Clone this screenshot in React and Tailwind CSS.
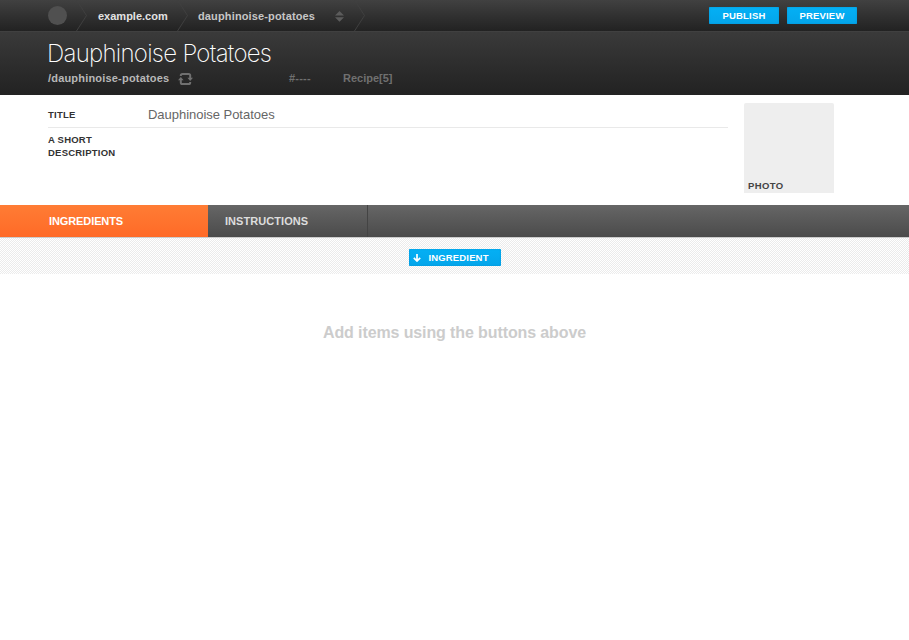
function Separator() {
  return (
    <svg width="12" height="31" viewBox="0 0 12 31" fill="none" className="shrink-0">
      <path d="M.5 0L10.5 15.5L.5 31" stroke="#404040" strokeWidth="1" />
    </svg>
  );
}

function ActionButton({ children }) {
  return (
    <button className="h-[17px] w-[70px] rounded-[1px] bg-linear-to-b from-[#04b0f5] to-[#04a5ea] text-center text-[9.5px] leading-[17px] font-bold tracking-[0.18px] text-white shadow-[inset_0_0_2px_#0794d5]">
      {children}
    </button>
  );
}

function TopBar() {
  return (
    <nav className="flex h-[31px] items-center bg-linear-to-b from-[#414141] to-[#222222] text-[11px] font-bold">
      <span className="ml-12 h-[19px] w-[19px] shrink-0 rounded-full bg-[#505050]" />
      <span className="ml-[9px] flex"><Separator /></span>
      <span className="ml-[10px] w-[79px] pt-[2px] text-[#e2e2e2]">example.com</span>
      <Separator />
      <span className="ml-[9px] w-[137px] pt-[2px] tracking-[0.14px] text-[#c6c6c6]">dauphinoise-potatoes</span>
      <svg width="9" height="11" viewBox="0 0 9 11" className="mt-px shrink-0" fill="#5c5c5c">
        <path d="M4.5 0L9 4.6H0ZM0 6.2H9L4.5 10.8Z" />
      </svg>
      <span className="ml-[10px] flex"><Separator /></span>
      <div className="mr-[52px] ml-auto flex gap-2">
        <ActionButton>PUBLISH</ActionButton>
        <ActionButton>PREVIEW</ActionButton>
      </div>
    </nav>
  );
}

function PageHeader() {
  return (
    <header className="h-16 border-t border-[#404040] bg-linear-to-b from-[#3a3a3a] to-[#222222] pl-12">
      <h1 className="-ml-px pt-[7px] font-['Inter',sans-serif] text-[24px] leading-[30px] font-extralight tracking-[-0.72px] whitespace-nowrap text-white">
        Dauphinoise Potatoes
      </h1>
      <div className="-mt-[2px] flex h-[22px] items-center text-[11px] font-bold text-[#707070]">
        <span className="w-[130px] tracking-[0.19px] text-[#b8b8b8]">/dauphinoise-potatoes</span>
        <svg width="15" height="12" viewBox="0 0 15 12" fill="none" className="mt-[2px] shrink-0">
          <path d="M2.8 3V2.6Q2.8 1 4.4 1H10.6Q12.2 1 12.2 2.6V6M12.2 9V9.4Q12.2 11 10.6 11H4.4Q2.8 11 2.8 9.4V6" stroke="#707070" strokeWidth="2" />
          <path d="M9.4 4.8H15L12.2 8ZM0 7.2L2.8 4L5.6 7.2Z" fill="#707070" />
        </svg>
        <span className="ml-24 w-[54px] tracking-[0.2px]">#----</span>
        <span>Recipe[5]</span>
      </div>
    </header>
  );
}

function DetailsForm() {
  return (
    <section className="flex h-[110px] items-start bg-white pt-2 pl-12">
      <div className="w-[680px] text-[9.5px] leading-[13px] font-bold tracking-[0.22px] text-[#333333]">
        <div className="flex h-[25px] items-center border-b border-[#e9e9e9] pb-px">
          <label className="w-[100px]">TITLE</label>
          <span className="text-[13px] font-normal tracking-[-0.03px] text-[#666666]">Dauphinoise Potatoes</span>
        </div>
        <label className="block w-20 pt-[5px]">A SHORT DESCRIPTION</label>
      </div>
      <div className="ml-4 flex h-[90px] w-[90px] items-end rounded-t-[2px] bg-[#eeeeee] pl-1 text-[9.5px] leading-[14px] font-bold tracking-[0.4px] text-[#444444]">
        PHOTO
      </div>
    </section>
  );
}

function Tabs() {
  return (
    <div className="flex h-[33px] border-b border-[#cccccc] bg-linear-to-b from-[#666666] to-[#4b4b4b] text-[11px] leading-[33px] font-bold">
      <div className="w-52 bg-linear-to-b from-[#ff7c34] to-[#ff6a27] pl-[49px] tracking-[-0.1px] text-white">INGREDIENTS</div>
      <div className="w-40 border-r border-[#444444] pl-[17px] tracking-[0.06px] text-[#dddddd]">INSTRUCTIONS</div>
    </div>
  );
}

export default function App() {
  return (
    <div className="h-[640px] w-[909px] overflow-hidden bg-white font-['Liberation_Sans',Arial,sans-serif]">
      <TopBar />
      <PageHeader />
      <DetailsForm />
      <Tabs />
      <div className="flex h-9 justify-center bg-white bg-[conic-gradient(#ebebeb_25%,#ffffff_0_50%,#ebebeb_0_75%,#ffffff_0)] bg-size-[2px_2px] pt-[11px]">
        <button className="flex h-[17px] w-[92px] items-center rounded-[1px] bg-linear-to-b from-[#04b0f5] to-[#04a5ea] pl-1 text-[9.5px] leading-[17px] font-bold text-white shadow-[inset_0_0_2px_#0794d5]">
          <svg width="8" height="8" viewBox="0 0 8 8" fill="none" stroke="white" strokeWidth="1.7">
            <path d="M4 0V7M.8 3.8L4 7L7.2 3.8" />
          </svg>
          <span className="ml-2 tracking-[0.15px]">INGREDIENT</span>
        </button>
      </div>
      <p className="pt-[47px] text-center text-[16px] leading-6 font-bold tracking-[-0.11px] text-[#cccccc]">
        Add items using the buttons above
      </p>
    </div>
  );
}
